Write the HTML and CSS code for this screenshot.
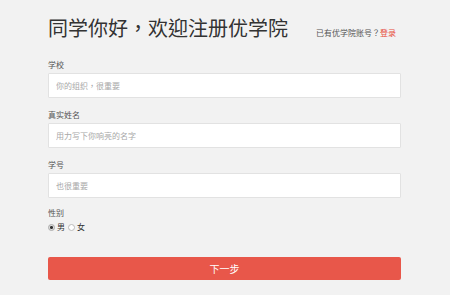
FILE: index.html
```html
<!DOCTYPE html>
<html lang="zh-CN">
<head>
<meta charset="utf-8">
<title>注册优学院</title>
<link rel="stylesheet" href="styles.css">
</head>
<body>
<div class="page">
  <div class="header">
    <h1 class="title" lang="zh-TW">同学你好，欢迎注册优学院</h1>
    <div class="login" lang="zh-TW">已有优学院账号？<a class="login-link" href="#">登录</a></div>
  </div>
  <form class="form">
    <div class="field">
      <label class="label">学校</label>
      <input class="input" type="text" lang="zh-TW" placeholder="你的组织，很重要">
    </div>
    <div class="field">
      <label class="label">真实姓名</label>
      <input class="input" type="text" placeholder="用力写下你响亮的名字">
    </div>
    <div class="field">
      <label class="label">学号</label>
      <input class="input" type="text" placeholder="也很重要">
    </div>
    <div class="field gender">
      <span class="label">性别</span>
      <div class="radios">
        <label class="radio"><input class="radio-input" type="radio" name="sex" checked>男</label>
        <label class="radio"><input class="radio-input" type="radio" name="sex">女</label>
      </div>
    </div>
    <button class="submit" type="button">下一步</button>
  </form>
</div>
</body>
</html>
```
FILE: styles.css
```css
html, body {
  margin: 0;
  padding: 0;
  background: #f2f2f2;
  font-family: "Noto Sans CJK SC", "Noto Sans", sans-serif;
  color: #333;
}

.page {
  width: 353px;
  margin-left: 48px;
  padding-top: 16px;
}

.header {
  display: flex;
  justify-content: space-between;
  align-items: baseline;
  padding-right: 5px;
}

.title {
  margin: 0;
  font-family: "Noto Sans CJK TC", "Noto Sans CJK SC", sans-serif;
  font-size: 20px;
  line-height: 24px;
  font-weight: normal;
  color: #333;
}

.login {
  font-family: "Noto Sans CJK TC", "Noto Sans CJK SC", sans-serif;
  font-size: 8px;
  line-height: 10px;
  color: #555;
}

.login-link {
  color: #e74c3c;
  text-decoration: none;
}

.form {
  margin-top: 20px;
  display: flex;
  flex-direction: column;
  gap: 12px;
}

.field {
  display: flex;
  flex-direction: column;
  gap: 3px;
}

.label {
  font-size: 8px;
  line-height: 10px;
  color: #555;
}

.input {
  box-sizing: border-box;
  height: 25px;
  width: 100%;
  margin: 0;
  padding: 0 7px;
  border: 1px solid #e2e2e2;
  border-radius: 1px;
  background: #fff;
  font-family: "Noto Sans CJK TC", "Noto Sans CJK SC", sans-serif;
  font-size: 8px;
  color: #333;
  outline: none;
}

.input::placeholder {
  color: #a8a8a8;
}

.gender {
  gap: 4px;
  margin-top: -2px;
}

.radios {
  display: flex;
  align-items: center;
  gap: 3px;
  font-size: 8px;
  line-height: 10px;
  color: #333;
}

.radio {
  display: flex;
  align-items: center;
  gap: 2px;
}

.radio-input {
  appearance: none;
  -webkit-appearance: none;
  margin: 0;
  width: 7px;
  height: 7px;
  border: 1px solid #bbb;
  border-radius: 50%;
  background: #fff;
  box-sizing: border-box;
}

.radio-input:checked {
  background: radial-gradient(circle, #333 0 1.3px, #ddd 1.6px);
  border-color: #aaa;
}

.submit {
  margin-top: 13px;
  height: 23px;
  width: 100%;
  border: none;
  border-radius: 2px;
  background: #e8574a;
  color: #fff;
  font-family: inherit;
  font-size: 10px;
  padding: 0;
}
```
